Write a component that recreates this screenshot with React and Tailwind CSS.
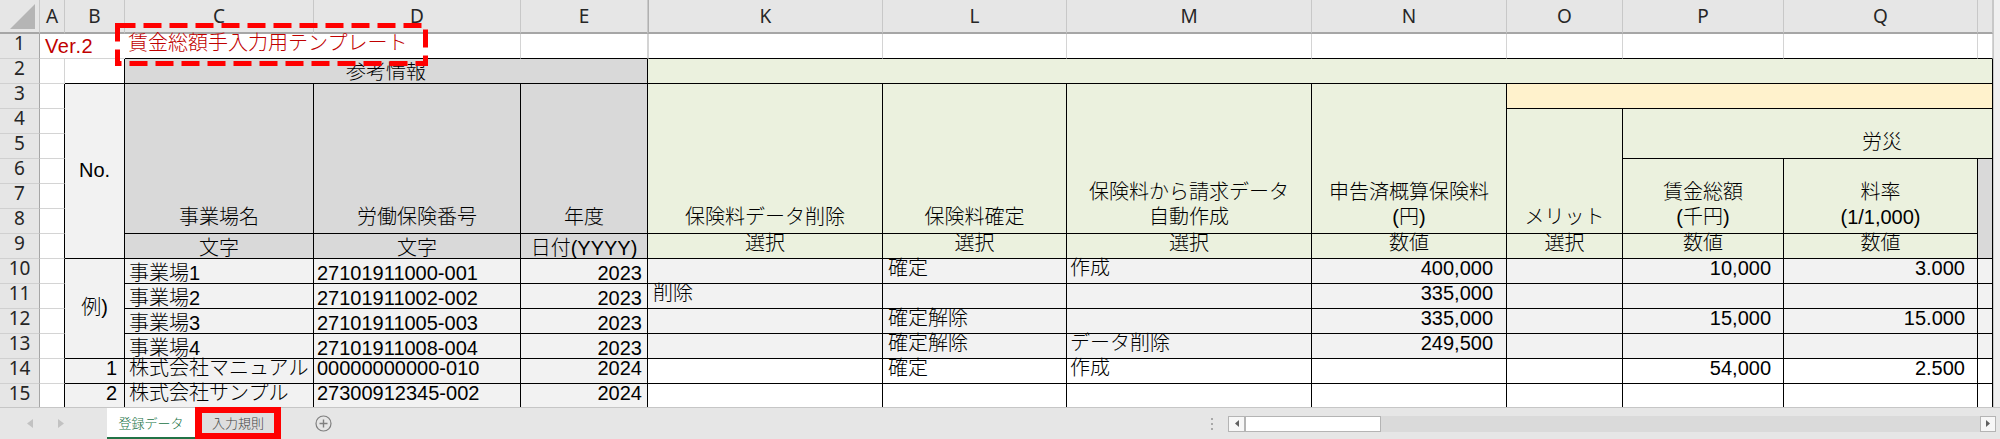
import React from "react";

const jp = "font-['Liberation_Sans','Noto_Sans_CJK_JP',sans-serif]";
const ui = "font-['Noto_Sans','Noto_Sans_CJK_JP',sans-serif]";
const tabFont = "font-['Noto_Sans_CJK_JP',sans-serif]";

const colHeads = [
  ["A", "col-start-2", ""],
  ["B", "col-start-3", ""],
  ["C", "col-start-4", ""],
  ["D", "col-start-5", ""],
  ["E", "col-start-6", ""],
  ["K", "col-start-7", "border-l border-l-[#b0b0b0]"],
  ["L", "col-start-8", ""],
  ["M", "col-start-9", ""],
  ["N", "col-start-10", ""],
  ["O", "col-start-11", ""],
  ["P", "col-start-12", ""],
  ["Q", "col-start-13", ""],
  ["", "col-start-14", ""],
];

const rowStarts = [
  "row-start-2", "row-start-3", "row-start-4", "row-start-5", "row-start-6",
  "row-start-7", "row-start-8", "row-start-9", "row-start-10", "row-start-11",
  "row-start-12", "row-start-13", "row-start-14", "row-start-15", "row-start-16",
];

// row 1 blank cells (E..R)
const row1Cols = [
  "col-start-6", "col-start-7 border-l border-l-[#d4d4d4]", "col-start-8", "col-start-9",
  "col-start-10", "col-start-11", "col-start-12", "col-start-13", "col-start-14",
];

const rows = [
  { r: "row-start-11", c: "事業場1", d: "27101911000-001", e: "2023", l: "確定", m: "作成", n: "400,000", p: "10,000", q: "3.000" },
  { r: "row-start-12", c: "事業場2", d: "27101911002-002", e: "2023", k: "削除", n: "335,000" },
  { r: "row-start-13", c: "事業場3", d: "27101911005-003", e: "2023", l: "確定解除", n: "335,000", p: "15,000", q: "15.000" },
  { r: "row-start-14", c: "事業場4", d: "27101911008-004", e: "2023", l: "確定解除", m: "データ削除", n: "249,500" },
  { r: "row-start-15", no: "1", c: "株式会社マニュアル", d: "00000000000-010", e: "2024", l: "確定", m: "作成", p: "54,000", q: "2.500", white: true },
  { r: "row-start-16", no: "2", c: "株式会社サンプル", d: "27300912345-002", e: "2024", white: true },
];

function Cell({ className = "", children }) {
  return (
    <div className={`flex whitespace-nowrap border-r border-b border-black text-[20px] leading-[19px] ${className}`}>
      {children}
    </div>
  );
}

// header label sitting on the bottom of a merged block
function HeadCell({ className = "", lines }) {
  return (
    <Cell className={`flex-col items-center justify-end pb-[3px] leading-[25px] ${className}`}>
      {lines.map((t) => (
        <span key={t}>{t}</span>
      ))}
    </Cell>
  );
}

function TabBar() {
  return (
    <div className="flex h-[32px] items-center border-t border-[#c6c6c6] bg-[#e6e6e6]">
      <div className="flex w-[107px] items-center gap-[25px] pl-[27px]">
        <svg width="6" height="9" viewBox="0 0 6 9">
          <polygon points="6,0 0,4.5 6,9" fill="#c2c2c2" />
        </svg>
        <svg width="6" height="9" viewBox="0 0 6 9">
          <polygon points="0,0 6,4.5 0,9" fill="#c2c2c2" />
        </svg>
      </div>
      <div className={`flex h-full w-[88px] items-center justify-center border-b-2 border-[#217346] bg-white text-[13px] text-[#217346] ${tabFont}`}>
        登録データ
      </div>
      <div className={`-mt-[2px] flex h-[34px] w-[86px] items-center justify-center self-start border-[7px] border-[#ff0000] bg-[#dedede] text-[13px] text-[#444] ${tabFont}`}>
        入力規則
      </div>
      <div className="ml-[34px] flex w-[17px] items-center">
        <svg width="17" height="17" viewBox="0 0 17 17">
          <circle cx="8.5" cy="8.5" r="7.5" fill="none" stroke="#7f7f7f" strokeWidth="1.2" />
          <path d="M8.5 4.5v8M4.5 8.5h8" stroke="#7f7f7f" strokeWidth="1.4" />
        </svg>
      </div>
      <div className="flex-1" />
      <div className="flex w-[17px] flex-col items-center gap-[3px]">
        <span className="h-[2px] w-[2px] bg-[#a8a8a8]" />
        <span className="h-[2px] w-[2px] bg-[#a8a8a8]" />
        <span className="h-[2px] w-[2px] bg-[#a8a8a8]" />
      </div>
      <div className="ml-[8px] mr-[4px] flex h-[16px] w-[768px] bg-[#dadada]">
        <div className="flex w-[17px] items-center justify-center border border-[#b4b4b4] bg-[#f7f7f7]">
          <svg width="4" height="7" viewBox="0 0 4 7">
            <polygon points="4,0 0,3.5 4,7" fill="#606060" />
          </svg>
        </div>
        <div className="w-[136px] border border-[#b4b4b4] bg-white" />
        <div className="flex-1" />
        <div className="flex w-[16px] items-center justify-center border border-[#b4b4b4] bg-[#f7f7f7]">
          <svg width="4" height="7" viewBox="0 0 4 7">
            <polygon points="0,0 4,3.5 0,7" fill="#606060" />
          </svg>
        </div>
      </div>
    </div>
  );
}

export default function App() {
  return (
    <div className={`h-[439px] w-[2000px] overflow-hidden bg-white font-light text-black ${jp}`}>
      <div className="relative h-[407px] overflow-hidden">
        <div className="grid grid-cols-[40px_25px_60px_189px_207px_127px_235px_184px_245px_195px_116px_161px_194px_15px_7px] grid-rows-[34px_repeat(15,25px)]">
          {/* corner */}
          <div className="col-start-1 row-start-1 flex items-end justify-end border-r border-b-2 border-r-[#c8c8c8] border-b-[#a6a6a6] bg-[#e6e6e6] pr-[3px] pb-[2px]">
            <svg width="26" height="26" viewBox="0 0 26 26">
              <polygon points="0,25 25,25 25,0" fill="#b5b5b5" />
            </svg>
          </div>

          {/* column letters */}
          {colHeads.map(([label, col, extra]) => (
            <div
              key={col}
              className={`${col} row-start-1 flex items-center justify-center border-r border-b-2 border-r-[#c8c8c8] border-b-[#a6a6a6] bg-[#e6e6e6] text-[19px] font-normal text-[#262626] ${ui} ${extra}`}
            >
              {label}
            </div>
          ))}

          {/* right edge strip */}
          <div className="col-start-15 row-start-1 row-span-16 border-l border-[#c8c8c8] bg-[#f0f0f0]" />

          {/* row numbers */}
          {rowStarts.map((r, i) => (
            <div
              key={r}
              className={`col-start-1 ${r} flex items-center justify-center border-r border-b border-r-[#a6a6a6] border-b-[#d0d0d0] bg-[#e6e6e6] pb-[5px] text-[19px] font-normal text-[#262626] ${ui}`}
            >
              {i + 1}
            </div>
          ))}

          {/* row 1 */}
          <div className="col-start-2 col-span-2 row-start-2 flex items-end border-b border-[#d4d4d4] pb-[2px] pl-[5px] text-[20px] leading-[19px] tracking-[0.5px] text-[#c00000]">
            Ver.2
          </div>
          <div className="col-start-4 col-span-2 row-start-2 flex items-start border-r border-b border-r-[#d4d4d4] border-b-black pl-[3px] text-[20px] leading-[19px] text-[#c00000]">
            賃金総額手入力用テンプレート
          </div>
          {row1Cols.map((c) => (
            <div key={c} className={`${c} row-start-2 border-r border-b border-r-[#d4d4d4] border-b-black`} />
          ))}

          {/* column A gridlines */}
          <div className="col-start-2 row-start-3 border-r border-b border-[#d4d4d4]" />
          {rowStarts.slice(2).map((r) => (
            <div key={r} className={`col-start-2 ${r} border-r border-b border-r-black border-b-[#d4d4d4]`} />
          ))}
          <div className="col-start-3 row-start-3 border-r border-b border-black" />

          {/* row 2 */}
          <Cell className="col-start-4 col-span-3 row-start-3 items-end justify-center bg-[#d9d9d9] pb-[1px]">参考情報</Cell>
          <Cell className="col-start-7 col-span-8 row-start-3 bg-[#ebf1de]" />

          {/* rows 3-9 */}
          <Cell className="col-start-3 row-start-4 row-span-7 items-center justify-center bg-[#f2f2f2] pb-[2px]">No.</Cell>
          <HeadCell className="col-start-4 row-start-4 row-span-6 bg-[#d9d9d9]" lines={["事業場名"]} />
          <HeadCell className="col-start-5 row-start-4 row-span-6 bg-[#d9d9d9]" lines={["労働保険番号"]} />
          <HeadCell className="col-start-6 row-start-4 row-span-6 bg-[#d9d9d9]" lines={["年度"]} />
          <Cell className="col-start-4 row-start-10 items-end justify-center bg-[#d9d9d9]">文字</Cell>
          <Cell className="col-start-5 row-start-10 items-end justify-center bg-[#d9d9d9]">文字</Cell>
          <Cell className="col-start-6 row-start-10 items-end justify-center bg-[#d9d9d9]">日付(YYYY)</Cell>

          <HeadCell className="col-start-7 row-start-4 row-span-6 bg-[#ebf1de]" lines={["保険料データ削除"]} />
          <HeadCell className="col-start-8 row-start-4 row-span-6 bg-[#ebf1de]" lines={["保険料確定"]} />
          <HeadCell className="col-start-9 row-start-4 row-span-6 bg-[#ebf1de]" lines={["保険料から請求データ", "自動作成"]} />
          <HeadCell className="col-start-10 row-start-4 row-span-6 bg-[#ebf1de]" lines={["申告済概算保険料", "(円)"]} />
          <Cell className="col-start-7 row-start-10 items-start justify-center bg-[#ebf1de]">選択</Cell>
          <Cell className="col-start-8 row-start-10 items-start justify-center bg-[#ebf1de]">選択</Cell>
          <Cell className="col-start-9 row-start-10 items-start justify-center bg-[#ebf1de]">選択</Cell>
          <Cell className="col-start-10 row-start-10 items-start justify-center bg-[#ebf1de]">数値</Cell>

          <Cell className="col-start-11 col-span-4 row-start-4 bg-[#fff2cc]" />
          <HeadCell className="col-start-11 row-start-5 row-span-5 bg-[#ebf1de]" lines={["メリット"]} />
          <Cell className="col-start-12 col-span-3 row-start-5 row-span-2 items-end bg-[#ebf1de] pb-[3px] pl-[239px] leading-[25px]">労災</Cell>
          <HeadCell className="col-start-12 row-start-7 row-span-3 bg-[#ebf1de]" lines={["賃金総額", "(千円)"]} />
          <HeadCell className="col-start-13 row-start-7 row-span-3 bg-[#ebf1de]" lines={["料率", "(1/1,000)"]} />
          <Cell className="col-start-14 row-start-7 row-span-4 bg-[#d9d9d9]" />
          <Cell className="col-start-11 row-start-10 items-start justify-center bg-[#ebf1de]">選択</Cell>
          <Cell className="col-start-12 row-start-10 items-start justify-center bg-[#ebf1de]">数値</Cell>
          <Cell className="col-start-13 row-start-10 items-start justify-center bg-[#ebf1de]">数値</Cell>

          {/* example block */}
          <Cell className="col-start-3 row-start-11 row-span-4 items-center justify-center bg-[#f2f2f2] pb-[2px]">例)</Cell>

          {/* data rows: the example rows sit low, the real rows sit high */}
          {rows.map((row) => {
            const bg = row.white ? "bg-white" : "bg-[#f2f2f2]";
            const low = row.white ? "items-start" : "items-end";
            return (
              <React.Fragment key={row.r}>
                {row.no && (
                  <Cell className={`col-start-3 ${row.r} items-start justify-end bg-[#f2f2f2] pr-[7px]`}>{row.no}</Cell>
                )}
                <Cell className={`col-start-4 ${row.r} ${low} bg-[#f2f2f2] pl-[4px]`}>{row.c}</Cell>
                <Cell className={`col-start-5 ${row.r} ${low} bg-[#f2f2f2] pl-[3px]`}>{row.d}</Cell>
                <Cell className={`col-start-6 ${row.r} ${low} justify-end bg-[#f2f2f2] pr-[5px]`}>{row.e}</Cell>
                <Cell className={`col-start-7 ${row.r} items-start ${bg} pl-[5px]`}>{row.k}</Cell>
                <Cell className={`col-start-8 ${row.r} items-start ${bg} pl-[5px]`}>{row.l}</Cell>
                <Cell className={`col-start-9 ${row.r} items-start ${bg} pl-[3px]`}>{row.m}</Cell>
                <Cell className={`col-start-10 ${row.r} items-start justify-end ${bg} pr-[13px]`}>{row.n}</Cell>
                <Cell className={`col-start-11 ${row.r} ${bg}`} />
                <Cell className={`col-start-12 ${row.r} items-start justify-end ${bg} pr-[12px]`}>{row.p}</Cell>
                <Cell className={`col-start-13 ${row.r} items-start justify-end ${bg} pr-[12px]`}>{row.q}</Cell>
                <Cell className={`col-start-14 ${row.r} ${bg}`} />
              </React.Fragment>
            );
          })}
        </div>

        {/* red dashed highlight around the title */}
        <svg className="absolute left-[115px] top-[23px]" width="313" height="43" viewBox="0 0 313 43">
          <rect x="2.5" y="2.5" width="308" height="38" fill="none" stroke="#ff0000" strokeWidth="5" strokeDasharray="18 8" />
        </svg>
      </div>
      <TabBar />
    </div>
  );
}
